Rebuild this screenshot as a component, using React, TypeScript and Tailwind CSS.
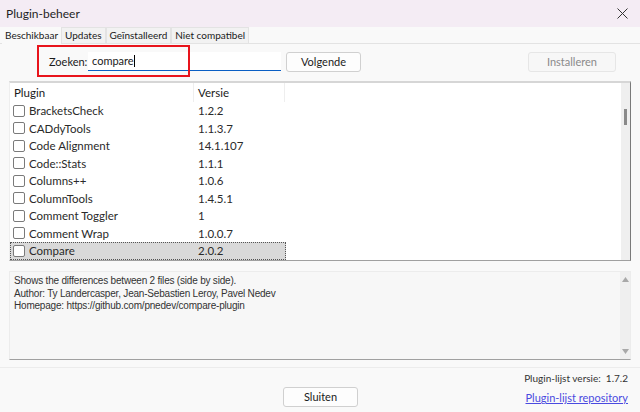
const plugins = [
  { name: "BracketsCheck", version: "1.2.2" },
  { name: "CADdyTools", version: "1.1.3.7" },
  { name: "Code Alignment", version: "14.1.107" },
  { name: "Code::Stats", version: "1.1.1" },
  { name: "Columns++", version: "1.0.6" },
  { name: "ColumnTools", version: "1.4.5.1" },
  { name: "Comment Toggler", version: "1" },
  { name: "Comment Wrap", version: "1.0.0.7" },
  { name: "Compare", version: "2.0.2" },
];

const tabs = ["Beschikbaar", "Updates", "Geïnstalleerd", "Niet compatibel"];

function Checkbox() {
  return <span className="w-[12px] h-[12px] rounded-[2px] border border-[#7a7a7a] bg-white shrink-0" />;
}

export default function App() {
  return (
    <div className="w-[640px] h-[412px] bg-[#f9f9f9] flex flex-col text-[11px] text-[#1a1a1a] font-['Lato',sans-serif] overflow-hidden">
      {/* Title bar */}
      <div className="h-[27px] bg-[#f4ecf4] flex items-center justify-between pl-[6px] pr-[12px]">
        <span className="text-[12px] text-[#1f1f1f]">Plugin-beheer</span>
        <svg width="11" height="11" viewBox="0 0 11 11" className="text-[#333]">
          <path d="M0.5 0.5l10 10M10.5 0.5l-10 10" stroke="currentColor" strokeWidth="1" />
        </svg>
      </div>

      {/* Tabs */}
      <div className="h-[17px] flex items-end pl-[2px] border-b border-[#e3e3e3] text-[10px]">
        {tabs.map((t, i) => (
          <div
            key={t}
            className={
              i === 0
                ? "h-[17px] px-[3px] flex items-center bg-[#f9f9f9] -mb-px"
                : "h-[16px] px-[3px] flex items-center bg-[#f2f2f2] border-l border-t border-r border-[#e3e3e3]"
            }
          >
            {t}
          </div>
        ))}
      </div>

      {/* Search row */}
      <div className="relative h-[37px] flex items-start pt-[8px]">
        <div className="absolute left-[37px] top-[1px] w-[153px] h-[32px] border-2 border-[#e8141c]" />
        <span className="ml-[49px] w-[39px] mt-[2px]">Zoeken:</span>
        <div className="w-[193px] h-[19px] bg-white border-b border-[#0a5fc4] flex items-center pl-[4px]">
          compare<span className="w-px h-[12px] bg-black" />
        </div>
        <button className="ml-[5px] w-[75px] h-[20px] bg-[#fdfdfd] border border-[#d0d0d0] rounded-[3px]">
          Volgende
        </button>
        <button className="ml-auto mr-[24px] w-[88px] h-[20px] bg-[#f7f7f7] border border-[#e6e6e6] rounded-[3px] text-[#8a8a8a]">
          Installeren
        </button>
      </div>

      {/* Plugin list */}
      <div className="mx-[9px] h-[180px] flex bg-white border-t-2 border-t-[#d6d6d6] border-r border-r-[#7a7a7a] border-l border-l-[#eeeeee] border-b border-b-[#a0a0a0] text-[11.5px]">
        <div className="flex-1 flex flex-col">
          <div className="h-[19px] flex items-center">
            <span className="w-[184px] pl-[4px] border-r border-[#eeeeee] h-full flex items-center">Plugin</span>
            <span className="w-[91px] pl-[4px] border-r border-[#eeeeee] h-full flex items-center">Versie</span>
          </div>
          {plugins.map((p, i) => {
            const sel = i === plugins.length - 1;
            return (
              <div
                key={p.name}
                className={
                  sel
                    ? "h-[17.5px] w-[276px] flex items-center bg-[#d9d9d9] border border-dotted border-[#555]"
                    : "h-[17.5px] w-[276px] flex items-center border border-transparent"
                }
              >
                <span className="w-[184px] pl-[2px] flex items-center gap-[4px]">
                  <Checkbox />
                  <span className="text-[#2a2a2a]">{p.name}</span>
                </span>
                <span className="pl-[3px] text-[#2a2a2a]">{p.version}</span>
              </div>
            );
          })}
        </div>
        <div className="w-[9px] bg-[#efefef] flex justify-center pt-[26px]">
          <span className="w-[3px] h-[16px] bg-[#8a8a8a]" />
        </div>
      </div>

      {/* Description */}
      <div className="mx-[9px] mt-[10px] h-[89px] flex bg-[#f7f7f7] border border-[#ececec] border-b-[#a0a0a0]">
        <div className="flex-1 pl-[4px] pt-[3px] text-[10px] leading-[12.5px] text-[#333] font-['Liberation_Sans',sans-serif] tracking-[-0.2px]">
          <div>Shows the differences between 2 files (side by side).</div>
          <div>Author: Ty Landercasper, Jean-Sebastien Leroy, Pavel Nedev</div>
          <div>Homepage: https://github.com/pnedev/compare-plugin</div>
        </div>
        <div className="w-[10px] bg-[#efefef] flex flex-col items-center justify-between py-[5px]">
          <svg width="7" height="5" viewBox="0 0 7 5"><path d="M3.5 0L7 5H0z" fill="#a8a8a8" /></svg>
          <svg width="7" height="5" viewBox="0 0 7 5"><path d="M0 0h7L3.5 5z" fill="#a8a8a8" /></svg>
        </div>
      </div>

      {/* Footer */}
      <div className="mt-[7px] flex-1 border-t border-[#ececec] relative flex flex-col items-end pr-[12px] pt-[3px]">
        <span className="text-[10px] text-[#333]">
          Plugin-lijst versie:&nbsp;&nbsp;1.7.2
        </span>
        <span className="mt-[4px] text-[11px] text-[#4a4ae0] underline">Plugin-lijst repository</span>
        <button className="absolute left-[283px] top-[19px] w-[75px] h-[20px] bg-[#fdfdfd] border border-[#d0d0d0] rounded-[3px]">
          Sluiten
        </button>
      </div>
    </div>
  );
}
